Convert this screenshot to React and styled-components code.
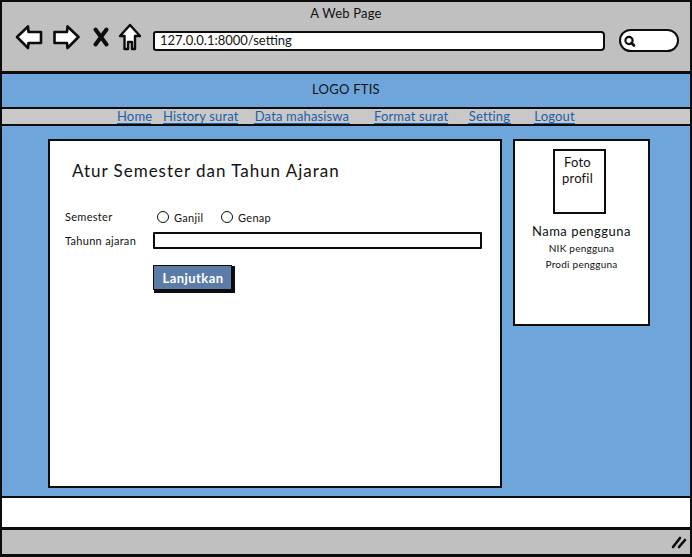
import React from "react";
import styled, { createGlobalStyle } from "styled-components";

const GlobalStyle = createGlobalStyle`
    html, body {
        margin: 0;
        padding: 0;
        background: #fff;
    }
    body {
        font-family: "Lato", "Open Sans", sans-serif;
        color: #111;
    }
`;

const Colors = {
    ink: "#0c0c0c",
    chrome: "#c0c0c0",
    navBar: "#c8c8c8",
    blue: "#6ea6dc",
    link: "#1f5ea8",
    button: "#5c7ca8",
};

const Window = styled.div`
    width: 692px;
    height: 557px;
    box-sizing: border-box;
    border: 2px solid ${Colors.ink};
    border-bottom-width: 3px;
    display: flex;
    flex-direction: column;
    background: ${Colors.chrome};
    overflow: hidden;
`;

const TitleBar = styled.div`
    height: 72px;
    flex: none;
    box-sizing: border-box;
    border-bottom: 3px solid ${Colors.ink};
    display: flex;
    flex-direction: column;
`;

const PageTitle = styled.div`
    text-align: center;
    font-size: 13px;
    line-height: 16px;
    padding-top: 3px;
    letter-spacing: 0.2px;
`;

const Toolbar = styled.div`
    display: flex;
    align-items: center;
    padding: 0 0 0 13px;
    margin-top: 2px;
    height: 32px;
`;

const NavIcon = styled.svg`
    display: block;
    flex: none;
    margin-right: ${(p) => p.$gap || 0}px;
    margin-bottom: 4px;
`;

const AddressBar = styled.div`
    width: 452px;
    height: 20px;
    box-sizing: border-box;
    margin-top: 3px;
    border: 2px solid ${Colors.ink};
    border-radius: 3px 4px 4px 3px;
    background: #fff;
    font-size: 13px;
    line-height: 15px;
    padding-left: 5px;
    margin-right: 14px;
`;

const SearchBox = styled.div`
    width: 60px;
    height: 23px;
    box-sizing: border-box;
    margin-top: 3px;
    border: 2px solid ${Colors.ink};
    border-radius: 12px;
    background: #fff;
    display: flex;
    align-items: center;
    padding-left: 1px;
`;

const LogoBar = styled.div`
    height: 33px;
    flex: none;
    box-sizing: border-box;
    background: ${Colors.blue};
    text-align: center;
    font-size: 13px;
    line-height: 31px;
    letter-spacing: 0.25px;
`;

const NavBar = styled.nav`
    height: 19px;
    flex: none;
    box-sizing: border-box;
    background: ${Colors.navBar};
    border-top: 2px solid ${Colors.ink};
    border-bottom: 2px solid ${Colors.ink};
    display: flex;
    align-items: center;
    padding-left: 115px;
`;

const NavLink = styled.a`
    color: ${Colors.link};
    font-size: 13px;
    line-height: 14px;
    letter-spacing: 0.15px;
    border-bottom: 1px solid ${Colors.link};
    white-space: nowrap;
    width: ${(p) => p.$width}px;
    margin-right: ${(p) => p.$gap || 0}px;
    text-align: center;
`;

const Content = styled.div`
    height: 370px;
    flex: none;
    box-sizing: border-box;
    background: ${Colors.blue};
    display: flex;
    align-items: flex-start;
    padding: 13px 0 0 46px;
`;

const MainPanel = styled.section`
    width: 454px;
    height: 349px;
    box-sizing: border-box;
    border: 2px solid ${Colors.ink};
    background: #fff;
    margin-right: 11px;
    padding: 19px 0 0 22px;
`;

const Heading = styled.h1`
    margin: 0 0 28px 0;
    font-size: 17px;
    font-weight: 400;
    line-height: 21px;
    letter-spacing: 0.97px;
`;

const FormGrid = styled.form`
    display: grid;
    grid-template-columns: 88px 329px;
    margin-left: -7px;
    row-gap: 7px;
    align-items: center;
`;

const FieldLabel = styled.label`
    font-size: 11px;
    line-height: 16px;
    letter-spacing: 0.3px;
`;

const RadioGroup = styled.div`
    display: flex;
    align-items: center;
    height: 16px;
    padding-left: 4px;
`;

const RadioMark = styled.span`
    width: 12px;
    height: 12px;
    box-sizing: border-box;
    border: 1.5px solid ${Colors.ink};
    border-radius: 50%;
    background: #fff;
    margin-right: 5px;
`;

const RadioText = styled.span`
    font-size: 11px;
    letter-spacing: 0.3px;
    width: ${(p) => p.$width}px;
`;

const TextField = styled.div`
    height: 17px;
    box-sizing: border-box;
    border: 2px solid ${Colors.ink};
    border-radius: 1px;
    background: #fff;
`;

const SubmitButton = styled.button`
    grid-column: 2;
    justify-self: start;
    width: 79px;
    height: 25px;
    margin-top: 9px;
    box-sizing: border-box;
    border: 1px solid ${Colors.ink};
    box-shadow: 2px 2px 0 1px ${Colors.ink};
    background: ${Colors.button};
    color: #fff;
    font-family: inherit;
    font-size: 13px;
    font-weight: 700;
    letter-spacing: 0.45px;
    padding: 0 0 0 1px;
`;

const ProfileCard = styled.aside`
    width: 137px;
    height: 187px;
    box-sizing: border-box;
    border: 2px solid ${Colors.ink};
    background: #fff;
    display: flex;
    flex-direction: column;
    align-items: center;
    padding-top: 8px;
`;

const PhotoBox = styled.div`
    width: 53px;
    height: 65px;
    box-sizing: border-box;
    border: 2px solid ${Colors.ink};
    text-align: center;
    font-size: 13px;
    line-height: 16px;
    padding: 3px 4px 0 0;
    letter-spacing: 0.2px;
    margin: 0 4px 9px 0;
`;

const UserName = styled.div`
    font-size: 13px;
    line-height: 17px;
    letter-spacing: 0.5px;
`;

const UserMeta = styled.div`
    font-size: 10px;
    line-height: 16px;
    letter-spacing: 0.25px;
`;

const FooterArea = styled.div`
    height: 34px;
    flex: none;
    box-sizing: border-box;
    background: #fff;
    border-top: 2px solid ${Colors.ink};
    border-bottom: 3px solid ${Colors.ink};
`;

const StatusBar = styled.div`
    flex: 1;
    display: flex;
    align-items: center;
    justify-content: flex-end;
    padding-right: 3px;
`;

const BackIcon = () => (
    <NavIcon width="28" height="26" viewBox="0 0 28 26" $gap={9}>
        <path d="M2 13 L13 2.5 L13.5 8 L26 8 L26 19 L13.5 19 L13 24 Z" fill="#fff" stroke={Colors.ink} strokeWidth="2.6" strokeLinejoin="round" />
    </NavIcon>
);

const ForwardIcon = () => (
    <NavIcon width="29" height="26" viewBox="0 0 28 26" $gap={12}>
        <path d="M26 13 L15 2.5 L14.5 8 L2 8 L2 19 L14.5 19 L15 24 Z" fill="#fff" stroke={Colors.ink} strokeWidth="2.6" strokeLinejoin="round" />
    </NavIcon>
);

const StopIcon = () => (
    <NavIcon width="16" height="20" viewBox="0 0 16 20" $gap={9}>
        <path d="M2.5 2.5 L13.5 17.5 M13.5 2.5 L2.5 17.5" stroke={Colors.ink} strokeWidth="4" strokeLinecap="round" />
    </NavIcon>
);

const HomeIcon = () => (
    <NavIcon width="24" height="28" viewBox="0 0 24 28" $gap={11}>
        <path d="M12 2 L22 13 L17 13 L17 26 L14 26 L14 19 L10 19 L10 26 L6.5 26 L6.5 13 L2 13 Z" fill="#fff" stroke={Colors.ink} strokeWidth="2.4" strokeLinejoin="round" />
    </NavIcon>
);

const SearchIcon = () => (
    <svg width="14" height="14" viewBox="0 0 14 14">
        <circle cx="7" cy="6.5" r="3.6" fill="#fff" stroke={Colors.ink} strokeWidth="2.2" />
        <path d="M9.5 9 L12 11.5" stroke={Colors.ink} strokeWidth="2.6" strokeLinecap="round" />
    </svg>
);

const ResizeGrip = () => (
    <svg width="16" height="14" viewBox="0 0 16 14">
        <path d="M2 12 L9 3 M8 12 L14 5" stroke={Colors.ink} strokeWidth="2.6" strokeLinecap="round" />
    </svg>
);

const links = [
    { label: "Home", width: 34, gap: 12 },
    { label: "History surat", width: 75, gap: 16 },
    { label: "Data mahasiswa", width: 96, gap: 24 },
    { label: "Format surat", width: 74, gap: 20 },
    { label: "Setting", width: 43, gap: 23 },
    { label: "Logout", width: 41 },
];

export default function App() {
    return (
        <Window>
            <GlobalStyle />
            <TitleBar>
                <PageTitle>A Web Page</PageTitle>
                <Toolbar>
                    <BackIcon />
                    <ForwardIcon />
                    <StopIcon />
                    <HomeIcon />
                    <AddressBar>127.0.0.1:8000/setting</AddressBar>
                    <SearchBox><SearchIcon /></SearchBox>
                </Toolbar>
            </TitleBar>
            <LogoBar>LOGO FTIS</LogoBar>
            <NavBar>
                {links.map((l) => (
                    <NavLink key={l.label} $width={l.width} $gap={l.gap}>{l.label}</NavLink>
                ))}
            </NavBar>
            <Content>
                <MainPanel>
                    <Heading>Atur Semester dan Tahun Ajaran</Heading>
                    <FormGrid>
                        <FieldLabel>Semester</FieldLabel>
                        <RadioGroup>
                            <RadioMark />
                            <RadioText $width={47}>Ganjil</RadioText>
                            <RadioMark />
                            <RadioText>Genap</RadioText>
                        </RadioGroup>
                        <FieldLabel>Tahunn ajaran</FieldLabel>
                        <TextField />
                        <SubmitButton type="button">Lanjutkan</SubmitButton>
                    </FormGrid>
                </MainPanel>
                <ProfileCard>
                    <PhotoBox>Foto<br />profil</PhotoBox>
                    <UserName>Nama pengguna</UserName>
                    <UserMeta>NIK pengguna</UserMeta>
                    <UserMeta>Prodi pengguna</UserMeta>
                </ProfileCard>
            </Content>
            <FooterArea />
            <StatusBar><ResizeGrip /></StatusBar>
        </Window>
    );
}
